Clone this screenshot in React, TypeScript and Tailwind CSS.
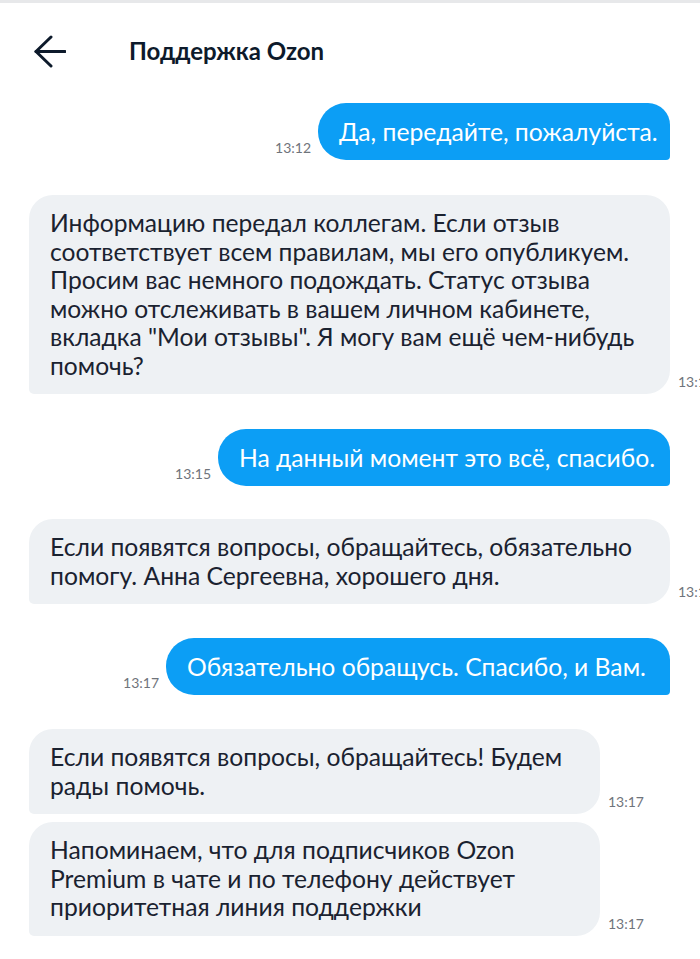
import React from "react";

const FONT = "font-['Lato','Noto_Sans',sans-serif]";

function Time({ t }: { t: string }) {
  return (
    <span className="text-[14px] leading-[18px] text-[#6f747b] mb-[3px] whitespace-nowrap font-['Lato',sans-serif]">
      {t}
    </span>
  );
}

function Out({ text, w, t, mt }: { text: string; w: string; t: string; mt: string }) {
  return (
    <div className={`flex justify-end items-end gap-[7px] pr-[30px] ${mt}`}>
      <Time t={t} />
      <div
        className={`${w} bg-[#0c9ef5] text-white rounded-tl-[28px] rounded-tr-[22px] rounded-bl-[28px] rounded-br-[4px] pl-[21px] py-[14px] text-[24.7px] leading-[29px] whitespace-nowrap`}
      >
        {text}
      </div>
    </div>
  );
}

function In({
  lines,
  w,
  t,
  mt,
  size,
}: {
  lines: string[];
  w: string;
  t: string;
  mt: string;
  size: string;
}) {
  return (
    <div className={`flex items-end gap-[8px] pl-[29px] ${mt}`}>
      <div
        className={`${w} ${size} shrink-0 bg-[#eef1f4] text-[#1a2230] rounded-tl-[24px] rounded-tr-[24px] rounded-br-[24px] rounded-bl-[5px] pl-[21px] py-[14px] leading-[28.5px]`}
      >
        {lines.map((l, i) => (
          <div key={i} className="whitespace-nowrap">
            {l}
          </div>
        ))}
      </div>
      <Time t={t} />
    </div>
  );
}

export default function App() {
  return (
    <div className={`w-[700px] h-[959px] overflow-hidden bg-white ${FONT}`}>
      <div className="h-[3px] bg-[#e7e8ea]" />
      <header className="h-[97px] flex items-center pl-[34px]">
        <svg width="32" height="33" viewBox="0 0 32 33" fill="none" stroke="#0d1a2b" strokeWidth="3" strokeLinecap="round" strokeLinejoin="round">
          <path d="M2 16.5H31" />
          <path d="M17 2L2 16.5L17 31" />
        </svg>
        <h1 className="ml-[63px] text-[24px] font-bold text-[#0d1a2b] leading-[30px] -mt-[2px]">Поддержка Ozon</h1>
      </header>
      <div className="flex flex-col">
        <Out text="Да, передайте, пожалуйста." w="w-[352px]" t="13:12" mt="mt-[3px]" />
        <In
          lines={[
            "Информацию передал коллегам. Если отзыв",
            "соответствует всем правилам, мы его опубликуем.",
            "Просим вас немного подождать. Статус отзыва",
            "можно отслеживать в вашем личном кабинете,",
            "вкладка \"Мои отзывы\". Я могу вам ещё чем-нибудь",
            "помочь?",
          ]}
          w="w-[641px]"
          size="text-[24.6px]"
          t="13:14"
          mt="mt-[35px]"
        />
        <Out text="На данный момент это всё, спасибо." w="w-[452px]" t="13:15" mt="mt-[35px]" />
        <In
          lines={["Если появятся вопросы, обращайтесь, обязательно", "помогу. Анна Сергеевна, хорошего дня."]}
          w="w-[641px]"
          size="text-[24.7px]"
          t="13:16"
          mt="mt-[33px]"
        />
        <Out text="Обязательно обращусь. Спасибо, и Вам." w="w-[504px]" t="13:17" mt="mt-[34px]" />
        <In
          lines={["Если появятся вопросы, обращайтесь! Будем", "рады помочь."]}
          w="w-[571px]"
          size="text-[24.7px]"
          t="13:17"
          mt="mt-[34px]"
        />
        <In
          lines={[
            "Напоминаем, что для подписчиков Ozon",
            "Premium в чате и по телефону действует",
            "приоритетная линия поддержки",
          ]}
          w="w-[571px]"
          size="text-[24.7px]"
          t="13:17"
          mt="mt-[8px]"
        />
      </div>
    </div>
  );
}
